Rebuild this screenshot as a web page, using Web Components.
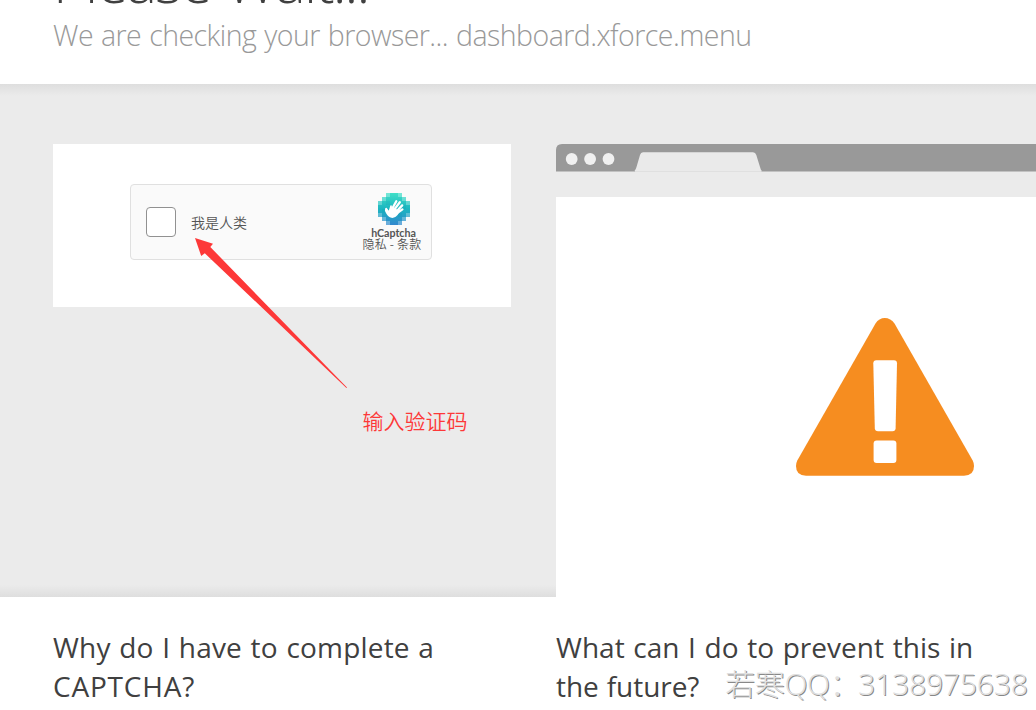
<!DOCTYPE html>
<html lang="en">
<head>
<meta charset="utf-8">
<title>Please Wait...</title>
<style>
html,body{margin:0;width:1036px;height:710px;overflow:hidden;background:#fff}
body{font-family:"Open Sans","Noto Sans CJK SC",sans-serif;color:#404040}
</style>
</head>
<body>
<check-page></check-page>
<script>
const define = (name, html) => customElements.define(name, class extends HTMLElement {
  constructor() {
    super();
    const t = document.createElement('template');
    t.innerHTML = html;
    this.attachShadow({ mode: 'open' }).append(t.content.cloneNode(true));
  }
});

define('page-header', `
<style>
:host{display:flex;flex-direction:column;justify-content:flex-end;box-sizing:border-box;height:84px;padding:0 0 28px 53px;overflow:hidden;background:#fff;white-space:nowrap}
h1{margin:0 0 3px;font-weight:300;font-size:58px;line-height:60px;letter-spacing:-1.9px;word-spacing:2px;flex:none}
p{margin:0;font-weight:300;font-size:28.5px;line-height:42px;letter-spacing:-.54px;word-spacing:1.1px;color:#999;flex:none}
</style>
<h1><slot name="title"></slot></h1><p><slot></slot></p>`);

define('captcha-logo', `
<style>:host{display:block;width:32px;height:32px}svg{display:block}</style>
<svg width="32" height="32" viewBox="0 0 32 32">
<defs><linearGradient id="v" x1="0" y1="0" x2="0" y2="1"><stop offset="0" stop-color="#40dfc7"/><stop offset=".5" stop-color="#1bb5c0"/><stop offset="1" stop-color="#3288ce"/></linearGradient></defs>
<path fill="url(#v)" d="M8 0h16v4h4v4h4v16h-4v4h-4v4H8v-4H4v-4H0V8h4V4h4z"/>
<path fill="#fff" fill-opacity=".28" d="M8 0h4v4H8zM20 0h4v4h-4zM4 4h4v4H4zM24 4h4v4h-4zM0 8h4v4H0zM28 8h4v4h-4zM0 20h4v4H0zM28 20h4v4h-4zM4 24h4v4H4zM24 24h4v4h-4zM8 28h4v4H8zM20 28h4v4h-4z"/>
<path fill="#008da8" fill-opacity=".12" d="M8 8h4v4H8zM12 12h8v4h-8zM24 12h4v4h-4zM4 16h4v4H4zM20 20h4v4h-4z"/>
<path stroke="#fff" stroke-linecap="round" fill="none" stroke-width="2.3" d="M14 16L18.3 8.3M16 17L21.8 9.2M18 19L24.2 12.4M18.5 20.5L24.4 16.4M10.5 20L8.2 16"/>
<path fill="#fff" d="M12.4 12.4c1-.5 1.7.3 1.5 1.4l.1 2 1.2-1.6 4.6 2.8.8 3.6c-1.7 3-4.7 4.7-7.3 4.2-2.9-.5-4.2-2.7-6.1-6.3-.9-2 .6-3.6 2-2.2l1.5 1.5z"/>
</svg>`);

define('captcha-widget', `
<style>
:host{display:flex;box-sizing:border-box;width:302px;height:76px;border:1px solid #e0e0e0;border-radius:4px;background:#fafafa;align-items:center;padding-left:15px;color:#555}
.box{box-sizing:border-box;width:30px;height:30px;border:1px solid #919191;border-radius:4px;background:#fff;flex:none}
.label{font-size:14px;line-height:20px;margin-left:15px;flex:1;font-family:"Noto Sans CJK SC",sans-serif;font-weight:350}
.brand{display:flex;flex-direction:column;align-items:center;width:64px;margin-right:7px;height:59px;white-space:nowrap}
captcha-logo{margin-left:3px;flex:none}
b{font:700 10.7px/12px "Lato",sans-serif;margin:2px 0 0 3px;letter-spacing:-.05px}
small{font:350 12px/13px "Noto Sans CJK SC",sans-serif;letter-spacing:.25px;margin-top:-2px}
</style>
<span class="box"></span><span class="label">我是人类</span>
<div class="brand"><captcha-logo></captcha-logo><b>hCaptcha</b><small>隐私 - 条款</small></div>`);

define('browser-mockup', `
<style>
:host{display:flex;flex-direction:column;width:480px;height:453px}
.bar{display:block;flex:none}
.pane{margin-top:25px;flex:1;background:#fff;display:flex;justify-content:center}
.warn{margin:121px 0 0 178px;flex:none}
</style>
<svg class="bar" width="480" height="28" viewBox="0 0 480 28"><path fill="#999" d="M0 27.5V6Q0 0 6 0H480V27.5z"/><path fill="#eaeaea" d="M78.5 27Q80 25 80.5 23L84 11Q84.7 8.3 87 8.3H197Q199.5 8.3 200.3 11L204 23Q204.7 26 206 27z"/><path fill="#e0e0e0" d="M79 27H205.5V28H79z"/><g fill="#f0f0f0"><circle cx="15.7" cy="15" r="5.9"/><circle cx="34.1" cy="15" r="5.9"/><circle cx="52.5" cy="15" r="5.9"/></g></svg>
<div class="pane"><svg class="warn" width="178" height="158" viewBox="0 0 178 158"><path fill="#f68d20" d="M79.5 5.5Q83 0 88.8 0T98.5 5.5L176.7 142.5Q178 145 178 148Q178 157.7 168 157.7H10Q0 157.7 0 148Q0 145 1.3 142.5z"/><path fill="#fff" d="M80.3 42.3H98Q101 42.3 101 45.3L99.6 110.3Q99.5 113.3 96.5 113.3H82Q79 113.3 78.8 110.3L77.3 45.3Q77.3 42.3 80.3 42.3z"/><rect x="77.6" y="122.4" width="22.8" height="22.6" rx="3" fill="#fff"/></svg></div>`);

define('check-stage', `
<style>
:host{display:grid;grid-template-columns:458px 480px;column-gap:45px;box-sizing:border-box;height:513px;padding:60px 0 0 53px;background:linear-gradient(#dedede,#ebebeb 12px,#ebebeb 501px,#dedede);align-items:start}
.card{display:flex;justify-content:center;align-items:flex-start;box-sizing:border-box;height:163px;padding:40px 2px 0 0;background:#fff}
</style>
<div class="card"><captcha-widget></captcha-widget></div><browser-mockup></browser-mockup>`);

define('help-topics', `
<style>
:host{display:grid;grid-template-columns:458px 480px;column-gap:45px;padding:31px 0 0 53px}
::slotted(h2){margin:0;font-weight:400;font-size:28px;line-height:39px;white-space:nowrap}
</style><slot></slot>`);

define('arrow-note', `
<style>
:host{position:absolute;left:195px;top:237px;width:280px;height:210px;color:#fd3838}
svg{position:absolute;left:0;top:0}
span{position:absolute;left:167.5px;top:168px;font:350 21px/30px "Noto Sans CJK SC",sans-serif;white-space:nowrap}
</style>
<svg width="160" height="155"><path fill="currentColor" d="M0 1L18 6.7L15.3 10L152 150.4L151.4 151L9.8 16.3L6.2 19z"/></svg><span><slot></slot></span>`);

define('photo-mark', `
<style>
:host{position:absolute;left:725px;top:663px;font:300 30px/42px "Open Sans","Noto Sans CJK SC",sans-serif;color:#e0e0e0;text-shadow:1px 1px 0 #888;white-space:nowrap;display:flex}
.name{width:133px;letter-spacing:-.3px}.num{letter-spacing:-.15px}
</style><span class="name"><slot name="name"></slot></span><span class="num"><slot></slot></span>`);

define('check-page', `
<style>
:host{display:block;position:relative;width:1036px;height:710px;overflow:hidden;background:#fff}
.a{letter-spacing:.2px;word-spacing:1.1px}.a span{letter-spacing:.8px}.b{letter-spacing:.03px;word-spacing:1.3px}.b span{letter-spacing:-.05px;word-spacing:.8px}
</style>
<page-header><span slot="title">Please Wait...</span>We are checking your browser... dashboard.xforce.menu</page-header>
<check-stage></check-stage>
<help-topics><h2 class="a">Why do I have to complete a<br><span>CAPTCHA?</span></h2><h2 class="b">What can I do to prevent this in<br><span>the future?</span></h2></help-topics>
<arrow-note>输入验证码</arrow-note>
<photo-mark><span slot="name">若寒QQ：</span>3138975638</photo-mark>`);
</script>
</body>
</html>
